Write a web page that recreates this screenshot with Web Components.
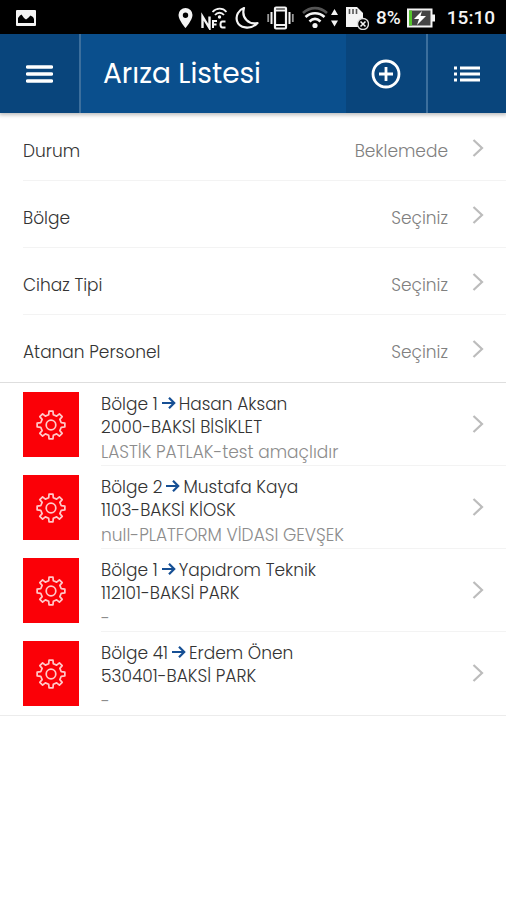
<!DOCTYPE html>
<html lang="tr">
<head>
<meta charset="utf-8">
<meta name="viewport" content="width=device-width, initial-scale=1">
<title>Arıza Listesi</title>
<style>
  body {
    margin: 0;
    background: #fff;
    color: #333;
    font: 300 17px/24px Poppins, Inter, "Open Sans", sans-serif;
  }
</style>
</head>
<body>
<fault-page></fault-page>

<script>
// Shared base: puts styles and markup in an open shadow root
class BaseElement extends HTMLElement {
  constructor() {
    super();
    this.attachShadow({ mode: 'open' });
  }

  connectedCallback() {
    this.shadowRoot.innerHTML = `<style>* { box-sizing: border-box; } svg { display: block; flex: none; } ${this.styles()}</style>${this.markup()}`;
  }
}

class StatusBar extends BaseElement {
  styles() {
    return `
      :host {
        display: flex;
        align-items: center;
        height: 34px;
        padding: 2px 11px 0 16px;
        background: #000;
        color: #f4f4f4;
        font: 500 19px/24px Roboto, sans-serif;
      }
      .spacer { flex: 1; }
      .icons { display: flex; align-items: center; gap: 8px; margin-right: 7px; }
      .battery { margin: 0 12px 0 6px; }
    `;
  }

  markup() {
    return `
      <svg width="20" height="16" viewBox="0 0 20 16"><rect width="20" height="16" rx="1" fill="#f4f4f4"/><path d="M2 13V8l2-2.500 1.500-1L8 8l2 1.500L12 8l2.500-2.500L17 7l1 2v4z" fill="#000"/></svg>
      <span class="spacer"></span>
      <span class="icons">
        <svg width="15" height="20" viewBox="0 0 15 20"><path fill="#f4f4f4" fill-rule="evenodd" d="M7.500 0a7 7 0 0 0-7 7c0 5 7 13 7 13s7-8 7-13a7 7 0 0 0-7-7zm0 4.500a2.700 2.700 0 1 1 0 5.400 2.700 2.700 0 0 1 0-5.400z"/></svg>
        <svg width="26" height="24" viewBox="0 0 26 24" fill="none" stroke="#f4f4f4">
          <path d="M1.500 22V10.500L8.500 22V10.500" stroke-width="2.400"/>
          <path d="M12 22v-7h4M12 18.500h3.500M24.500 15.500h-3c-1.500 0-2 1-2 3s.5 3 2 3h3" stroke-width="2"/>
          <path d="M11.500 6c4-4.500 10.500-4.500 14 0M14 9c2.500-3 6.500-3 9 0" stroke-width="1.800"/><circle cx="18.500" cy="11" r="1.700" fill="#f4f4f4" stroke="none"/>
        </svg>
        <svg width="24" height="24" viewBox="0 0 24 24"><path d="M9 2C3.500 4 .5 9.500 2 15c2 7 13.500 9.500 20.500 2C14 19 6 12 9 2z" fill="none" stroke="#f4f4f4" stroke-width="2.200" stroke-linejoin="round"/></svg>
        <svg width="27" height="24" viewBox="0 0 27 24" fill="none" stroke="#f4f4f4"><rect x="8" y="1.500" width="11" height="21" rx="1" stroke-width="2.200"/><path d="M8 4.500h11M8 19h11" stroke-width="2"/><path d="M4.500 6v12M22.500 6v12" stroke-width="2"/><path d="M1.200 8v8M25.800 8v8" stroke="#999" stroke-width="1.800"/></svg>
        <svg width="36" height="24" viewBox="0 0 36 24" fill="none" stroke="#f4f4f4" stroke-width="2.600"><path d="M1 7c7-6.500 17-6.500 24 0" stroke="#555"/><path d="M3.500 11c5.500-5 13.500-5 19 0M7.500 15.500c3.500-3.300 7.500-3.300 11 0"/><circle cx="13" cy="19.500" r="2.600" fill="#f4f4f4" stroke="none"/><path d="M29 9l3.500-6L36 9zM29 14.500l3.500 6 3.500-6z" fill="#f4f4f4" stroke="none"/></svg>
        <svg width="23" height="24" viewBox="0 0 23 24"><path d="M0 1h11l6 6v14H0z" fill="#f4f4f4"/><path d="M3.500 3v5M7 3v5M10.500 3v5" stroke="#555" stroke-width="1.600"/><circle cx="17" cy="18" r="5.500" fill="#000" stroke="#ddd" stroke-width="1.400"/><path d="M14.500 15.500l5 5m0-5l-5 5" stroke="#f4f4f4" stroke-width="1.600"/></svg>
      </span>
      <span>8%</span>
      <svg class="battery" width="28" height="20" viewBox="0 0 28 20"><rect x="1" y="1.500" width="23.500" height="17" fill="#444" stroke="#f4f4f4" stroke-width="2"/><path d="M25 6.500h3v7h-3z" fill="#f4f4f4"/><path d="M2 2.500h3v15H2z" fill="#55c52b"/><path d="M15 3L7 11h5l-2 6 9-9h-5.500z" fill="#fff"/></svg>
      <time>15:10</time>
    `;
  }
}

class AppHeader extends BaseElement {
  styles() {
    return `
      :host {
        display: flex;
        position: relative;
        height: 79px;
        background: #0a4f8d;
        color: #fff;
        box-shadow: 0 1px 4px 1px #0004;
      }
      h1 {
        flex: 1;
        margin: 0;
        padding-left: 22px;
        align-self: center;
        font-size: 28px;
        line-height: 36px;
        font-weight: 400;
        white-space: nowrap;
      }
      button {
        display: flex;
        align-items: center;
        justify-content: center;
        width: 80px;
        padding: 0;
        border: 0;
        background: #09457c;
        color: inherit;
      }
      .menu { width: 81px; border-right: 2px solid #3c6f9d; }
      .list { border-left: 2px solid #3c6f9d; }
    `;
  }

  markup() {
    return `
      <button class="menu" aria-label="Menü">
        <svg width="27" height="20" viewBox="0 0 27 20"><path d="M1.500 3h24M1.500 10h24M1.500 17h24" stroke="#fff" stroke-width="3.400" stroke-linecap="round"/></svg>
      </button>
      <h1><slot></slot></h1>
      <button aria-label="Ekle">
        <svg width="30" height="30" viewBox="0 0 30 30" fill="none" stroke="#fff" stroke-width="2.800"><circle cx="15" cy="15" r="13"/><path d="M15 8v14M8 15h14"/></svg>
      </button>
      <button class="list" aria-label="Liste">
        <svg width="28" height="18" viewBox="0 0 28 18"><path d="M1 3h3M1 9h3M1 15h3M7 3h20M7 9h20M7 15h20" stroke="#fff" stroke-width="3.200"/></svg>
      </button>
    `;
  }
}

class ChevronIcon extends BaseElement {
  styles() {
    return `:host { display: block; flex: none; pointer-events: none; }`;
  }

  markup() {
    return `<svg width="12" height="20" viewBox="0 0 12 20"><path d="M1.500 2l8.500 8-8.500 8" fill="none" stroke="#bcbcbc" stroke-width="2.200"/></svg>`;
  }
}

class FilterRow extends BaseElement {
  styles() {
    return `
      :host { display: block; padding-left: 23px; }
      .row {
        display: flex;
        align-items: center;
        min-height: 67px;
        padding-right: 22px;
        padding-top: 7px;
        border-bottom: 1px solid #f3f3f3;
      }
      :host(:last-of-type) .row { border-color: transparent; }
      select {
        flex: 1;
        min-width: 0;
        padding: 0;
        margin-right: 24px;
        border: 0;
        appearance: none;
        background: none;
        color: #808080;
        font: inherit;
        text-align: right;
        text-align-last: right;
      }
      chevron-icon { padding-bottom: 6px; }
    `;
  }

  markup() {
    return `
      <div class="row">
        <label for="value">${this.getAttribute('label')}</label>
        <select id="value"><option>${this.getAttribute('value')}</option></select>
        <chevron-icon></chevron-icon>
      </div>
    `;
  }
}

class FaultItem extends BaseElement {
  styles() {
    return `
      :host { display: block; }
      a {
        display: flex;
        padding-left: 23px;
        color: inherit;
        text-decoration: none;
      }
      .thumb {
        display: flex;
        align-items: center;
        justify-content: center;
        width: 56px;
        height: 65px;
        margin: 9px 22px 9px 0;
        background: #fb0007;
      }
      .body {
        flex: 1;
        min-width: 0;
        display: flex;
        align-items: center;
        justify-content: space-between;
        padding-right: 22px;
        border-bottom: 1px solid #f3f3f3;
      }
      :host(:last-of-type) .body { border-color: transparent; }
      :host(:last-of-type) { border-bottom: 1px solid #ececec; }
      .text { padding-top: 9px; }
      p { margin: 0; line-height: 23px; }
      .who { display: flex; align-items: center; gap: 3px; }
      .note { color: #8c8c8c; line-height: 26px; }
    `;
  }

  markup() {
    return `
      <a href="#">
        <span class="thumb">
          <svg width="30" height="30" viewBox="-15 -15 30 30" fill="none" stroke="#ffc9c9" stroke-width="1.700" stroke-linejoin="round">
            <path d="${gearPath(8, 14, 10.500)}"/><circle r="4.800"/>
          </svg>
        </span>
        <div class="body">
          <div class="text">
            <p class="who">
              <span>${this.getAttribute('region')}</span>
              <svg width="15" height="14" viewBox="0 0 15 14" fill="none" stroke="#164f94" stroke-width="2.200"><path d="M1 6h12M8 .8L13.200 6 8 11.200"/></svg>
              <span>${this.getAttribute('person')}</span>
            </p>
            <p>${this.getAttribute('device')}</p>
            <p class="note">${this.getAttribute('note')}</p>
          </div>
          <chevron-icon></chevron-icon>
        </div>
      </a>
    `;
  }
}

// Outline of a gear centred on 0,0, one tooth pointing up
function gearPath(teeth, outer, inner) {
  const step = Math.PI * 2 / teeth;
  const points = [];
  for (let i = 0; i < teeth; i++) {
    const a = i * step;
    [[inner, -0.28], [outer, -0.18], [outer, 0.18], [inner, 0.28]].forEach(([r, k]) => {
      points.push(`${(r * Math.cos(a + k * step)).toFixed(2)} ${(r * Math.sin(a + k * step)).toFixed(2)}`);
    });
  }
  return `M${points.join('L')}Z`;
}

class FaultPage extends BaseElement {
  styles() {
    return `
      :host { display: block; }
      .filters { padding-top: 1px; border-bottom: 1px solid #dedede; }
    `;
  }

  markup() {
    return `
      <status-bar></status-bar>
      <app-header>Arıza Listesi</app-header>
      <main>
        <section class="filters">
          <filter-row label="Durum" value="Beklemede"></filter-row>
          <filter-row label="Bölge" value="Seçiniz"></filter-row>
          <filter-row label="Cihaz Tipi" value="Seçiniz"></filter-row>
          <filter-row label="Atanan Personel" value="Seçiniz"></filter-row>
        </section>
        <section>
          <fault-item region="Bölge 1" person="Hasan Aksan" device="2000-BAKSİ BİSİKLET" note="LASTİK PATLAK-test amaçlıdır"></fault-item>
          <fault-item region="Bölge 2" person="Mustafa Kaya" device="1103-BAKSİ KİOSK" note="null-PLATFORM VİDASI GEVŞEK"></fault-item>
          <fault-item region="Bölge 1" person="Yapıdrom Teknik" device="112101-BAKSİ PARK" note="-"></fault-item>
          <fault-item region="Bölge 41" person="Erdem Önen" device="530401-BAKSİ PARK" note="-"></fault-item>
        </section>
      </main>
    `;
  }
}

customElements.define('status-bar', StatusBar);
customElements.define('app-header', AppHeader);
customElements.define('chevron-icon', ChevronIcon);
customElements.define('filter-row', FilterRow);
customElements.define('fault-item', FaultItem);
customElements.define('fault-page', FaultPage);
</script>
</body>
</html>
